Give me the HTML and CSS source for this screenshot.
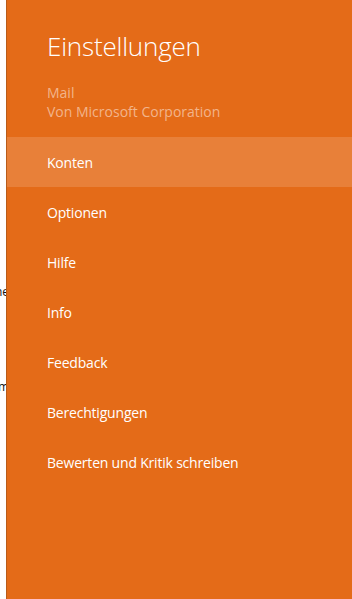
FILE: index.html
```html
<!DOCTYPE html>
<html lang="de">
<head>
<meta charset="utf-8">
<title>Einstellungen</title>
<link rel="stylesheet" href="styles.css">
</head>
<body>
<div class="screen">
  <div class="under">
    <div class="frag frag-1">ne</div>
    <div class="frag frag-2">m</div>
  </div>
  <aside class="charm">
    <h1 class="title">Einstellungen</h1>
    <div class="app">
      <div>Mail</div>
      <div>Von Microsoft Corporation</div>
    </div>
    <ul class="menu">
      <li class="item active">Konten</li>
      <li class="item">Optionen</li>
      <li class="item">Hilfe</li>
      <li class="item">Info</li>
      <li class="item">Feedback</li>
      <li class="item">Berechtigungen</li>
      <li class="item">Bewerten und Kritik schreiben</li>
    </ul>
  </aside>
</div>
</body>
</html>
```
FILE: styles.css
```css
html, body {
  margin: 0;
  padding: 0;
  background: #ffffff;
}
.screen {
  display: flex;
  width: 352px;
  height: 599px;
  overflow: hidden;
}
.under {
  width: 6px;
  flex: none;
  overflow: hidden;
  position: relative;
  background: #ffffff;
  font-family: "Open Sans", "Liberation Sans", sans-serif;
  font-size: 12px;
  color: #111;
}
.frag {
  position: absolute;
  right: -3px;
  white-space: nowrap;
}
.frag-1 { top: 283px; }
.frag-2 { top: 378px; }
.charm {
  flex: 1;
  background: #e46b18;
  border-left: 1px solid #b85c1a;
  color: #ffffff;
  font-family: "Open Sans", "Liberation Sans", sans-serif;
}
.title {
  margin: 30px 0 0 40px;
  font-size: 26px;
  font-weight: 300;
  line-height: 33px;
  letter-spacing: -0.2px;
}
.app {
  margin: 20px 0 0 40px;
  color: #f2b48b;
  font-size: 14px;
  line-height: 19px;
  font-weight: 400;
}
.menu {
  list-style: none;
  margin: 16px 0 0 0;
  padding: 0;
}
.item {
  height: 50px;
  display: flex;
  align-items: center;
  padding-left: 40px;
  font-size: 14px;
  letter-spacing: -0.2px;
}
.item.active {
  background: #e88039;
}
```
